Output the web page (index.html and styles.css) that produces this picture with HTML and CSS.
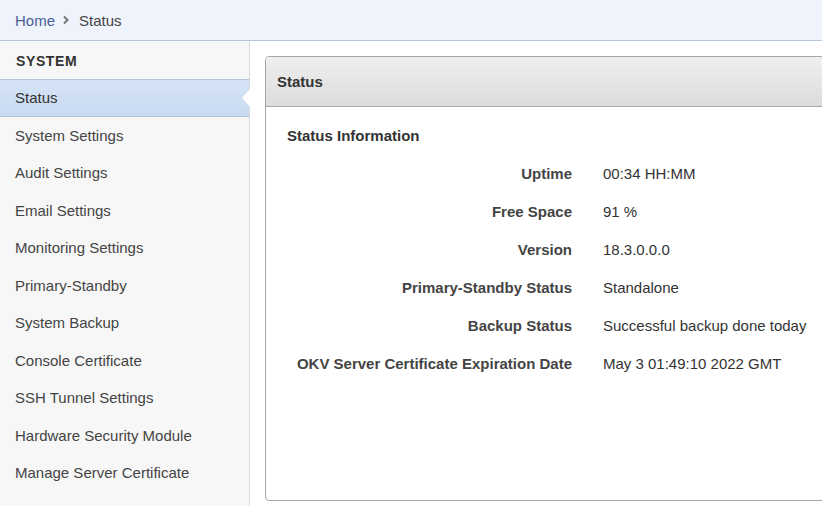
FILE: index.html
```html
<!DOCTYPE html>
<html>
<head>
<meta charset="utf-8">
<link rel="stylesheet" href="styles.css">
</head>
<body>
<div class="crumbs">
  <a class="crumb-link">Home</a>
  <svg class="chev" width="8" height="10" viewBox="0 0 8 10"><path d="M2 1.5 L5.5 5 L2 8.5" fill="none" stroke="#777" stroke-width="2"/></svg>
  <span class="crumb-cur">Status</span>
</div>
<div class="layout">
  <nav class="side">
    <div class="side-head">SYSTEM</div>
    <div class="side-item active">Status</div>
    <div class="side-item">System Settings</div>
    <div class="side-item">Audit Settings</div>
    <div class="side-item">Email Settings</div>
    <div class="side-item">Monitoring Settings</div>
    <div class="side-item">Primary-Standby</div>
    <div class="side-item">System Backup</div>
    <div class="side-item">Console Certificate</div>
    <div class="side-item">SSH Tunnel Settings</div>
    <div class="side-item">Hardware Security Module</div>
    <div class="side-item">Manage Server Certificate</div>
  </nav>
  <main class="main">
    <section class="panel">
      <div class="panel-head">Status</div>
      <div class="panel-body">
        <div class="sec-title">Status Information</div>
        <div class="row"><div class="lbl">Uptime</div><div class="val">00:34 HH:MM</div></div>
        <div class="row"><div class="lbl">Free Space</div><div class="val">91 %</div></div>
        <div class="row"><div class="lbl">Version</div><div class="val">18.3.0.0.0</div></div>
        <div class="row"><div class="lbl">Primary-Standby Status</div><div class="val">Standalone</div></div>
        <div class="row"><div class="lbl">Backup Status</div><div class="val">Successful backup done today</div></div>
        <div class="row"><div class="lbl">OKV Server Certificate Expiration Date</div><div class="val">May 3 01:49:10 2022 GMT</div></div>
      </div>
    </section>
  </main>
</div>
</body>
</html>
```
FILE: styles.css
```css
html, body {
  margin: 0;
  padding: 0;
  width: 822px;
  height: 506px;
  overflow: hidden;
  background: #fff;
  font-family: "Liberation Sans", Arial, sans-serif;
  font-size: 15px;
  color: #333;
}

.crumbs {
  height: 41px;
  box-sizing: border-box;
  background: #eff3fb;
  border-bottom: 1px solid #b7c5d9;
  display: flex;
  align-items: center;
  padding-left: 15px;
}
.crumb-link { color: #4b5e94; }
.chev { margin: 0 9px 0 7px; }
.crumb-cur { color: #444; }

.layout {
  display: flex;
  height: 465px;
}

.side {
  width: 249px;
  flex: none;
  background: #f7f7f7;
  border-right: 1px solid #dcdcdc;
}
.side-head {
  height: 39px;
  box-sizing: border-box;
  border-bottom: 1px solid #b8c6da;
  font-weight: bold;
  font-size: 14px;
  color: #333;
  letter-spacing: 0.6px;
  padding: 1px 0 0 16px;
  display: flex;
  align-items: center;
}
.side-item {
  height: 37.5px;
  display: flex;
  align-items: center;
  padding-left: 15px;
  padding-bottom: 1px;
  box-sizing: border-box;
  color: #444;
}
.side-item.active {
  position: relative;
  height: 37px;
  background: linear-gradient(#d6e4f6, #c8daf1);
  border-bottom: 1px solid #b3c3da;
  color: #333;
}
.side-item.active::after {
  content: "";
  position: absolute;
  right: -1px;
  top: 9px;
  border-style: solid;
  border-width: 9px 8px 9px 0;
  border-color: transparent #fff transparent transparent;
}

.main {
  flex: 1;
  overflow: hidden;
  padding: 15px 0 0 15px;
}

.panel {
  width: 600px;
  height: 445px;
  box-sizing: border-box;
  border: 1px solid #a8a8a8;
  border-radius: 4px;
  overflow: hidden;
}
.panel-head {
  height: 50px;
  box-sizing: border-box;
  background: linear-gradient(#efefef, #dcdcdc);
  border-bottom: 1px solid #a8a8a8;
  font-weight: bold;
  color: #333;
  padding-left: 11px;
  display: flex;
  align-items: center;
}
.panel-body {
  padding: 9px 0 0 21px;
}
.sec-title {
  height: 38px;
  display: flex;
  align-items: center;
  font-weight: bold;
  color: #333;
}
.row {
  height: 38px;
  display: flex;
  align-items: center;
}
.lbl {
  width: 285px;
  text-align: right;
  font-weight: bold;
  color: #444;
}
.val {
  margin-left: 31px;
  color: #333;
}
```
